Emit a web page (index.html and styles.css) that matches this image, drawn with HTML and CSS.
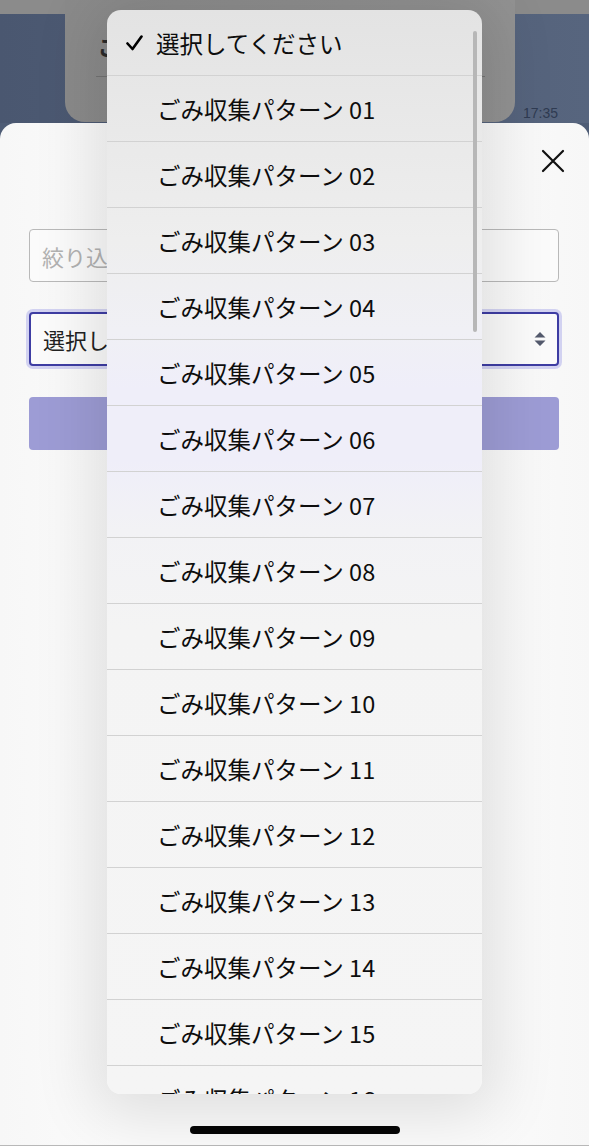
FILE: index.html
```html
<!DOCTYPE html>
<html lang="ja">
<head>
<meta charset="utf-8">
<title>ごみ収集パターン</title>
<link rel="stylesheet" href="styles.css">
</head>
<body>
<header class="backdrop">
  <div class="card">
    <div class="card-title">ごみ収集パターン</div>
    <div class="card-rule"></div>
  </div>
  <div class="time">17:35</div>
</header>
<main class="sheet">
  <button class="close" aria-label="閉じる">
    <svg width="24" height="24" viewBox="0 0 24 24"><path d="M2 2 L22 22 M22 2 L2 22" stroke="#111" stroke-width="2.2" fill="none" stroke-linecap="round"/></svg>
  </button>
  <div class="form">
    <div class="field input"><span class="placeholder">絞り込み検索</span></div>
    <div class="field select">
      <span class="select-text">選択してください</span>
      <span class="arrows">
        <svg width="12" height="16" viewBox="0 0 12 16"><path d="M6 1 L11.5 6.5 L0.5 6.5 Z M0.5 9.5 L11.5 9.5 L6 15 Z" fill="#545a6d"/></svg>
      </span>
    </div>
    <div class="submit">検索</div>
  </div>
  <div class="home-bar"></div>
</main>
<div class="picker">
  <div class="option selected">
    <svg class="check" width="17" height="16" viewBox="0 0 17 16"><path d="M1.5 8.5 L6.5 14 L15.5 1.5" stroke="#000" stroke-width="2.6" fill="none" stroke-linecap="round" stroke-linejoin="round"/></svg>
    <span>選択してください</span>
  </div>
  <div class="option"><span>ごみ収集パターン 01</span></div>
  <div class="option"><span>ごみ収集パターン 02</span></div>
  <div class="option"><span>ごみ収集パターン 03</span></div>
  <div class="option"><span>ごみ収集パターン 04</span></div>
  <div class="option"><span>ごみ収集パターン 05</span></div>
  <div class="option"><span>ごみ収集パターン 06</span></div>
  <div class="option"><span>ごみ収集パターン 07</span></div>
  <div class="option"><span>ごみ収集パターン 08</span></div>
  <div class="option"><span>ごみ収集パターン 09</span></div>
  <div class="option"><span>ごみ収集パターン 10</span></div>
  <div class="option"><span>ごみ収集パターン 11</span></div>
  <div class="option"><span>ごみ収集パターン 12</span></div>
  <div class="option"><span>ごみ収集パターン 13</span></div>
  <div class="option"><span>ごみ収集パターン 14</span></div>
  <div class="option"><span>ごみ収集パターン 15</span></div>
  <div class="option"><span>ごみ収集パターン 16</span></div>
  <div class="scrollbar"></div>
</div>
</body>
</html>
```
FILE: styles.css
```css
html, body {
  margin: 0;
  padding: 0;
}
body {
  width: 589px;
  height: 1146px;
  overflow: hidden;
  position: relative;
  font-family: "Noto Sans CJK JP", "Noto Sans", sans-serif;
  background: #4e5c75;
}
.backdrop {
  height: 123px;
  display: flex;
  background:
    linear-gradient(to bottom, #8b8b8b 0, #8b8b8b 14px, transparent 14px),
    linear-gradient(to right, #4a5770, #57657e);
}
.card {
  margin-left: 65px;
  width: 450px;
  height: 122px;
  box-sizing: border-box;
  background: linear-gradient(to right, #8a8a8a, #929292);
  border-radius: 0 0 20px 20px;
  padding: 33px 30px 0 31px;
}
.card-title {
  font-size: 22px;
  line-height: 24px;
  font-weight: 700;
  color: #2a2a2a;
  padding-left: 2px;
  white-space: nowrap;
  overflow: hidden;
}
.card-rule {
  margin-top: 19px;
  border-top: 1px solid #737373;
}
.time {
  align-self: flex-end;
  margin: 0 0 2px 8px;
  font-family: "Liberation Sans", sans-serif;
  font-size: 14px;
  line-height: 16px;
  color: #2f3b52;
}
.sheet {
  height: 1023px;
  box-sizing: border-box;
  background: linear-gradient(to right, #f7f7f7, #fbfbfb 20%, #fbfbfb 80%, #f7f7f7);
  border-radius: 16px 16px 0 0;
  border-bottom: 1px solid #b8b8b8;
  display: flex;
  flex-direction: column;
}
.close {
  align-self: flex-end;
  margin: 26px 24px 0 0;
  width: 24px;
  height: 24px;
  padding: 0;
  border: 0;
  background: none;
  display: flex;
}
.form {
  margin-top: 56px;
  padding: 0 30px 0 29px;
  display: flex;
  flex-direction: column;
}
.field {
  box-sizing: border-box;
  border-radius: 4px;
  display: flex;
  align-items: center;
  font-size: 22px;
  background: #fbfbfb;
}
.input {
  height: 53px;
  border: 1.5px solid #b9b9b9;
  padding-left: 12px;
}
.placeholder {
  color: #b2b2b2;
}
.select {
  margin-top: 30px;
  height: 54px;
  border: 2px solid #3e3da3;
  box-shadow: 0 0 0 3px rgba(140, 140, 230, 0.35);
  padding: 0 11px 0 12px;
  justify-content: space-between;
}
.select-text {
  color: #222;
}
.arrows {
  display: flex;
}
.submit {
  margin-top: 31px;
  height: 53px;
  border-radius: 4px;
  background: #9d9cd5;
  color: #fff;
  font-size: 22px;
  display: flex;
  align-items: center;
  justify-content: center;
}
.home-bar {
  margin: auto auto 11px;
  width: 210px;
  height: 8px;
  border-radius: 4px;
  background: #060606;
}
.picker {
  position: absolute;
  left: 107px;
  top: 10px;
  width: 375px;
  height: 1084px;
  border-radius: 14px;
  overflow: hidden;
  background: linear-gradient(to bottom,
    #e3e3e3 0px,
    #e9e9e9 120px,
    #eeeeee 230px,
    #f0f0f5 320px,
    #efeef9 380px,
    #efeef9 450px,
    #f2f2f5 520px,
    #f4f4f4 620px,
    #f5f5f5 1084px);
  box-shadow: 0 8px 60px 16px rgba(0, 0, 0, 0.11);
}
.option {
  height: 65px;
  border-bottom: 1px solid #d2d2d2;
  display: flex;
  align-items: center;
  padding-left: 50px;
  font-size: 23.5px;
  color: #0d0d0d;
  white-space: nowrap;
}
.option.selected {
  padding-left: 19px;
}
.check {
  margin-right: 13px;
  flex: none;
}
.scrollbar {
  position: absolute;
  top: 21px;
  right: 5px;
  width: 4px;
  height: 301px;
  border-radius: 2px;
  background: #b7b7b7;
}
```
